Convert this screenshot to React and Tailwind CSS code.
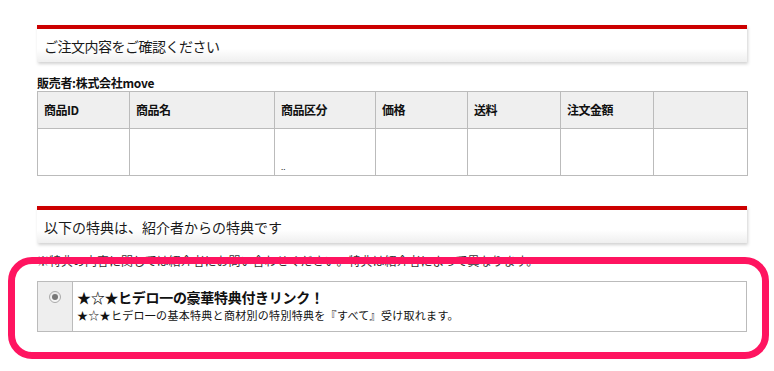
export default function App() {
  const font = { fontFamily: '"Noto Sans CJK JP", "Noto Sans", sans-serif' };
  const cols = [
    { label: "商品ID", w: "w-[92px]" },
    { label: "商品名", w: "w-[145px]" },
    { label: "商品区分", w: "w-[101px]" },
    { label: "価格", w: "w-[92px]" },
    { label: "送料", w: "w-[93px]" },
    { label: "注文金額", w: "w-[93px]" },
    { label: "", w: "w-[94px]" },
  ];
  return (
    <div className="relative w-[774px] h-[371px] bg-white overflow-hidden text-[#111]" style={font}>
      <div className="ml-[37px] w-[710px] pt-[25px]">
        {/* Panel 1 header */}
        <div className="border-t-4 border-[#cc0000] bg-gradient-to-b from-white from-60% to-[#efefef] shadow-[1px_2px_3px_rgba(0,0,0,0.18)] h-[37px] flex items-center pl-[7px]">
          <span className="text-[14px] leading-none text-[#1a1a1a] tracking-[-0.5px]">ご注文内容をご確認ください</span>
        </div>
        <div className="mt-[12px] h-[17px] text-[12px] font-bold leading-[17px] tracking-[-0.3px]">販売者:株式会社move</div>
        <table className="border-collapse table-fixed w-[710px]">
          <thead>
            <tr className="h-[37px] bg-[#efefef]">
              {cols.map((c, i) => (
                <th key={i} className={`${c.w} border border-[#bbbbbb] text-left align-middle pl-[6px] text-[12px] font-bold leading-none tracking-[-0.5px]`}>
                  {c.label}
                </th>
              ))}
            </tr>
          </thead>
          <tbody>
            <tr className="h-[47px] bg-white">
              {cols.map((c, i) => (
                <td key={i} className="border border-[#bbbbbb] align-bottom pl-[6px] pb-[4px] text-[8px] leading-none">
                  {i === 2 ? ".." : ""}
                </td>
              ))}
            </tr>
          </tbody>
        </table>

        {/* Panel 2 header */}
        <div className="mt-[30px] border-t-4 border-[#cc0000] bg-gradient-to-b from-white from-60% to-[#efefef] shadow-[1px_2px_3px_rgba(0,0,0,0.18)] h-[37px] flex items-center pl-[7px]">
          <span className="text-[14px] leading-none text-[#1a1a1a]">以下の特典は、紹介者からの特典です</span>
        </div>
        <div className="mt-[10px] h-[16px] text-[12px] leading-[16px] text-[#333] whitespace-nowrap">
          ※特典の内容に関しては紹介者にお問い合わせください。特典は紹介者によって異なります。
        </div>
        <div className="mt-[12px] h-[51px] flex border border-[#bbbbbb]">
          <div className="w-[35px] bg-[#eeeeee] border-r border-[#bbbbbb] flex justify-center pt-[9px]">
            <div className="w-[12px] h-[12px] rounded-full border border-[#aaaaaa] bg-gradient-to-b from-[#e8e8e8] to-[#f8f8f8] flex items-center justify-center">
              <div className="w-[6px] h-[6px] rounded-full bg-[#777777]" />
            </div>
          </div>
          <div className="flex-1 pl-[4px] pt-[6px] bg-white">
            <div className="text-[14px] font-bold leading-[18px] tracking-[-0.3px] text-[#111]">★☆★ヒデロ一の豪華特典付きリンク！</div>
            <div className="mt-[2px] text-[11px] leading-[14px] tracking-[0.3px] text-[#111]">★☆★ヒデロ一の基本特典と商材別の特別特典を『すべて』受け取れます。</div>
          </div>
        </div>
      </div>

      {/* pink annotation */}
      <div className="absolute left-[8px] top-[257px] w-[761px] h-[102px] rounded-[24px] border-[7px] border-[#ff1460]" />
    </div>
  );
}
